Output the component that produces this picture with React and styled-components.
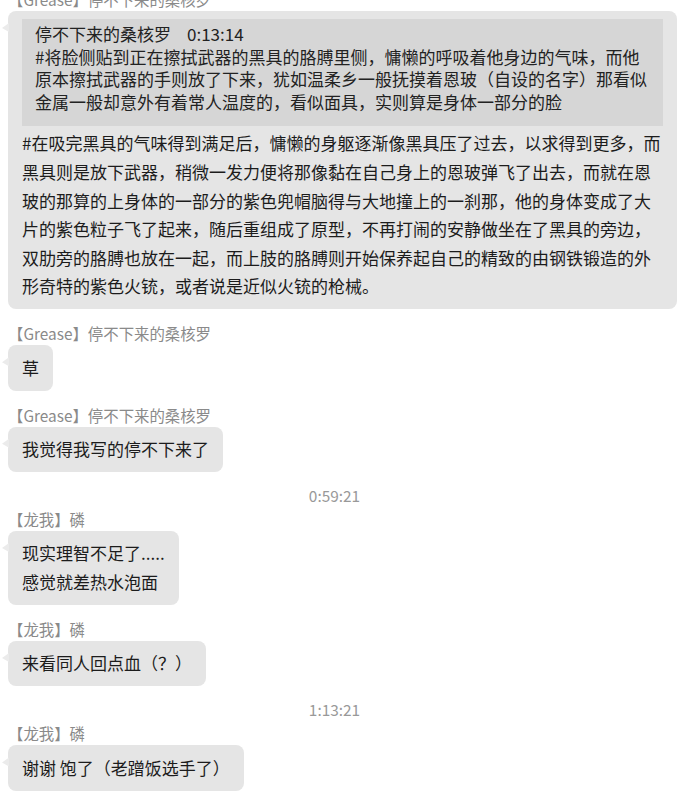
import React from "react";
import styled, { createGlobalStyle } from "styled-components";

const Global = createGlobalStyle`
  html, body {
    margin: 0;
    padding: 0;
    background: #ffffff;
    overflow: hidden;
  }
  body {
    font-family: "Noto Sans CJK SC", "Microsoft YaHei", sans-serif;
  }
`;

const Page = styled.div`
  width: 682px;
  height: 800px;
  overflow: hidden;
  background: #ffffff;
`;

const Feed = styled.div`
  display: flex;
  flex-direction: column;
  align-items: stretch;
  margin-top: -11px;
  padding: 0 5px 0 8px;
`;

const Group = styled.div`
  display: flex;
  flex-direction: column;
  align-items: flex-start;
  margin-bottom: ${(p) => (p.$beforeTime ? 13 : 14)}px;
`;

const Sender = styled.div`
  font-size: 15.4px;
  line-height: 21px;
  height: 21px;
  color: #8a8a8a;
  margin-bottom: 1px;
  white-space: nowrap;
`;

const Bubble = styled.div`
  position: relative;
  background: #e5e5e5;
  border-radius: 8px;
  padding: 8.4px 14px;
  max-width: 100%;
  box-sizing: border-box;
  color: #1c1c1c;
  font-size: 17px;
  line-height: 28.6px;
  ${(p) => (p.$full ? "width: 100%;" : "")}

  &::before {
    content: "";
    position: absolute;
    left: -6px;
    top: 12px;
    width: 7px;
    height: 9px;
    background: #ebebeb;
    clip-path: polygon(100% 0, 100% 100%, 0 55%);
  }
`;

const Quote = styled.div`
  background: #d6d6d6;
  padding: 4px 13px 13px;
  margin-bottom: 3px;
  font-size: 17px;
  line-height: 22.5px;
  color: #222;
`;

const QuoteHead = styled.div`
  display: flex;
  gap: 16px;
`;

const Line = styled.div``;

const Stamp = styled.div`
  text-align: center;
  font-size: 15.4px;
  line-height: 21px;
  height: 21px;
  color: #999;
  margin-bottom: 3px;
  padding-right: 16px;
`;

const messages = [
  {
    type: "msg",
    sender: "【Grease】停不下来的桑核罗",
    full: true,
    quote: {
      name: "停不下来的桑核罗",
      time: "0:13:14",
      text:
        "#将脸侧贴到正在擦拭武器的黑具的胳膊里侧，慵懒的呼吸着他身边的气味，而他原本擦拭武器的手则放了下来，犹如温柔乡一般抚摸着恩玻（自设的名字）那看似金属一般却意外有着常人温度的，看似面具，实则算是身体一部分的脸",
    },
    lines: [
      "#在吸完黑具的气味得到满足后，慵懒的身躯逐渐像黑具压了过去，以求得到更多，而黑具则是放下武器，稍微一发力便将那像黏在自己身上的恩玻弹飞了出去，而就在恩玻的那算的上身体的一部分的紫色兜帽脑得与大地撞上的一刹那，他的身体变成了大片的紫色粒子飞了起来，随后重组成了原型，不再打闹的安静做坐在了黑具的旁边，双肋旁的胳膊也放在一起，而上肢的胳膊则开始保养起自己的精致的由钢铁锻造的外形奇特的紫色火铳，或者说是近似火铳的枪械。",
    ],
  },
  { type: "msg", sender: "【Grease】停不下来的桑核罗", lines: ["草"] },
  {
    type: "msg",
    sender: "【Grease】停不下来的桑核罗",
    lines: ["我觉得我写的停不下来了"],
    beforeTime: true,
  },
  { type: "time", text: "0:59:21" },
  {
    type: "msg",
    sender: "【龙我】磷",
    lines: ["现实理智不足了.....", "感觉就差热水泡面"],
  },
  {
    type: "msg",
    sender: "【龙我】磷",
    lines: ["来看同人回点血（？）"],
    beforeTime: true,
  },
  { type: "time", text: "1:13:21" },
  { type: "msg", sender: "【龙我】磷", lines: ["谢谢 饱了（老蹭饭选手了）"] },
];

export default function App() {
  return (
    <Page>
      <Global />
      <Feed>
        {messages.map((m, i) =>
          m.type === "time" ? (
            <Stamp key={i}>{m.text}</Stamp>
          ) : (
            <Group key={i} $beforeTime={m.beforeTime}>
              <Sender>{m.sender}</Sender>
              <Bubble $full={m.full}>
                {m.quote && (
                  <Quote>
                    <QuoteHead>
                      <span>{m.quote.name}</span>
                      <span>{m.quote.time}</span>
                    </QuoteHead>
                    <Line>{m.quote.text}</Line>
                  </Quote>
                )}
                {m.lines.map((l, j) => (
                  <Line key={j}>{l}</Line>
                ))}
              </Bubble>
            </Group>
          )
        )}
      </Feed>
    </Page>
  );
}
